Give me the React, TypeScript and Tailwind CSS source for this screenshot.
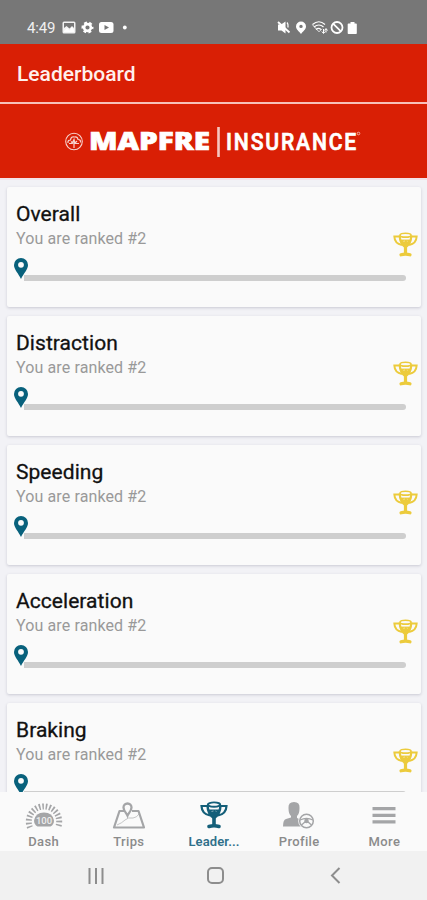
import type { ReactNode } from "react";

const Trophy = ({ className }: { className: string }) => (
    <svg viewBox="0 0 28 28" className={className} fill="none" stroke="currentColor">
        <path d="M7.500 4q.3 9.500 6.500 13 6.200-3.500 6.500-13" strokeWidth="2.500" />
        <path d="M8.500 9l11 0q-1.500 6-5.500 8-4-2-5.500-8z" fill="currentColor" />
        <ellipse cx="14" cy="3.600" rx="6.200" ry="2.200" fill="#fafafa" strokeWidth="1.900" />
        <path d="M7 5H1.500c.2 5.500 3.500 8.500 8.500 9.500M21 5h5.500c-.2 5.500-3.500 8.500-8.500 9.500" strokeWidth="2.200" />
        <path d="M11.500 10.500l2-.5M15.500 10l1 .5" stroke="#fafafa" strokeWidth="1" opacity="0.500" />
        <path d="M14 16v8" strokeWidth="3.600" />
        <path d="M9 25.500q5-1.500 10 0" strokeWidth="3.600" strokeLinecap="round" />
    </svg>
);

const Pin = ({ className }: { className: string }) => (
    <svg viewBox="0 0 14 21" className={className} fill="currentColor">
        <path fillRule="evenodd" d="M7 0a7 7 0 0 0-7 7c0 4.500 4.500 8.500 7 14 2.500-5.500 7-9.500 7-14a7 7 0 0 0-7-7zm0 3.900a2.900 2.900 0 1 1 0 5.800 2.900 2.900 0 0 1 0-5.800z" />
    </svg>
);

const StatusBar = () => (
    <div className="flex h-11 shrink-0 items-start bg-[#777777] pt-5 text-white">
        <span className="ml-[27px] w-[35px] text-[15px] leading-[16px] tracking-[-0.2px] text-[#f0f0f0]">4:49</span>
        <svg width="68" height="16" viewBox="0 0 68 16" fill="currentColor">
            <path fillRule="evenodd" d="M2 1.500h10q1.500 0 1.500 1.500v9q0 1.500-1.500 1.500H2Q.5 13.500.5 12V3Q.5 1.500 2 1.500zm0 1.500v5l2.500-2 3 2.500L10 6l2 2V3z" opacity="0.9" />
            <path d="M2 11l3-3 2.500 2.500L10 7l2 3v2H2z" />
            <circle cx="25.500" cy="7.500" r="3.400" fill="none" stroke="currentColor" strokeWidth="2.600" />
            <circle cx="25.500" cy="7.500" r="5" fill="none" stroke="currentColor" strokeWidth="2" strokeDasharray="2.900 2.336" strokeDashoffset="1.450" />
            <rect x="37" y="2" width="14.500" height="11" rx="2.500" />
            <path d="M42.500 5v5l4.500-2.500z" fill="#777777" />
            <circle cx="62.800" cy="7.500" r="1.900" />
        </svg>
        <svg width="84" height="16" viewBox="0 0 84 16" fill="currentColor" className="ml-[147px]">
            <path d="M1 4.500h3l4.500-3V13.500L4.500 10.500H1z" />
            <path d="M1 2l11.500 10.500" stroke="currentColor" strokeWidth="1.800" />
            <path d="M10 2.500q1.500 1.500 1 5" fill="none" stroke="currentColor" strokeWidth="1.300" />
            <path fillRule="evenodd" d="M24 1.500a5 5 0 0 0-5 5c0 3.200 3 4.500 5 7.500 2-3 5-4.300 5-7.500a5 5 0 0 0-5-5zm0 3.200a1.700 1.700 0 1 1 0 3.400 1.700 1.700 0 0 1 0-3.400z" />
            <g fill="none" stroke="currentColor" strokeWidth="1.200">
                <path d="M35.500 4.500q6.500-5.500 12.500 0M37 7q5-4 9.500 0M39 9.500q2.500-2.200 5 0" />
                <path d="M35.500 4.800l6.500 7 3-3" strokeWidth="0.800" />
                <path d="M46.500 9v4M44.800 11.500l1.700 2 1.700-2M49 12.500V9M47.500 10.500L49 8.500l1.500 2" strokeWidth="1" />
                <circle cx="60" cy="7.500" r="5.500" strokeWidth="1.800" />
                <path d="M56.300 3.800l7.400 7.400" strokeWidth="1.700" />
            </g>
            <path d="M72 3.500h1.500V2h4v1.500H79q.8 0 .8.800v8.900q0 .8-.8.800h-7.500q-.8 0-.8-.8V4.300q0-.8.800-.8z" />
        </svg>
    </div>
);

const Logo = () => (
    <svg width="427" height="74" viewBox="0 0 427 74" fill="#fff">
        <g fill="none" stroke="#fff" opacity="0.8">
            <circle cx="74" cy="37.500" r="8.300" strokeWidth="1.100" />
            <path d="M68 39q-.5-3 2.500-3 .5-4 4-3 3-.5 3.500 2.500 3 0 2.500 3M69 39.500h3l2-4 1 4h4M74 36v8M71 37.500l2 2M77 37l-2 2" strokeWidth="1.200" />
        </g>
        <text x="89" y="46" fontFamily="Open Sans" fontWeight="800" fontSize="24" textLength="121" lengthAdjust="spacingAndGlyphs" stroke="#fff" strokeWidth="0.700">MAPFRE</text>
        <rect x="217.200" y="23" width="2.600" height="30" opacity="0.75" />
        <text transform="translate(226 46) scale(0.88 1)" fontFamily="Roboto" fontWeight="500" fontSize="24" textLength="148" lengthAdjust="spacing" stroke="#fff" strokeWidth="0.700">INSURANCE</text>
        <circle cx="358.500" cy="29.500" r="1.300" fill="none" stroke="#fff" strokeWidth="0.800" opacity="0.700" />
    </svg>
);

const RankCard = ({ title, rank }: { title: string; rank: number }) => (
    <div className="flex h-[120px] shrink-0 flex-col rounded-[2px] bg-[#fafafa] pl-[9px] pr-[15px] pt-[14px] shadow-[0_1px_3px_rgba(60,60,90,0.22)]">
        <div className="h-[26px] text-[21px] leading-[26px] tracking-[0.05px] text-[#111111] [-webkit-text-stroke:0.3px_#111111]">{title}</div>
        <div className="flex h-[31px] justify-between">
            <div className="text-[16px] leading-[24px] tracking-[0.12px] text-[#999999]">You are ranked #{rank}</div>
            <Trophy className="-mr-[12px] mt-[5px] h-[25px] w-[25px] text-[#eccb3c]" />
        </div>
        <div className="flex h-[21px]">
            <Pin className="-ml-[2px] h-[21px] w-[14px] shrink-0 text-[#08617c]" />
            <div className="-ml-[4px] mt-[17px] h-[6px] grow rounded-r-full bg-[#cecece]" />
        </div>
    </div>
);

const DashIcon = () => (
    <svg width="38" height="29" viewBox="0 0 38 29">
        <path d="M5 26.500A15.200 15.200 0 1 1 33 26.500" fill="none" stroke="currentColor" strokeWidth="6" strokeDasharray="1.600 1.900" />
        <path d="M12.500 25.500q-3.500-2-3.500-6 1.500-8 10-8t10 8q0 4-3.500 6z" fill="currentColor" />
        <text x="19" y="22.500" textAnchor="middle" fontSize="9.500" fontWeight="500" fill="#eeeeee" fontFamily="Roboto">100</text>
    </svg>
);

const TripsIcon = () => (
    <svg width="34" height="29" viewBox="0 0 34 29" fill="none" stroke="currentColor">
        <path d="M12 10H7.500L2 26.500h30L26.500 10H20" strokeWidth="2.200" strokeLinejoin="round" />
        <path d="M5 24q5-2 8-5t8-2q4-.5 6-4" strokeWidth="0.900" opacity="0.700" />
        <path d="M15.500 14.500c-1-2.500-4-4.500-4-8a4 4 0 0 1 8 0c0 3.500-3 5.500-4 8z" strokeWidth="2.300" fill="#fafafa" />
    </svg>
);

const ProfileIcon = () => (
    <svg width="34" height="29" viewBox="0 0 34 29">
        <path d="M6.500 7q-.5-6 5.500-6t5.500 6q0 6-2.500 8v2l7 3v5.500H1q0-7 3-7.500l5-1.500V15q-2.500-2-2.500-8z" fill="currentColor" />
        <circle cx="24.500" cy="20" r="8.300" fill="#fafafa" />
        <g fill="none" stroke="currentColor" strokeWidth="1.500">
            <circle cx="24.500" cy="20" r="6.800" />
            <path d="M18 19q6.500-3 13 0M23.500 20.500l-4 3.500M25.500 20.500l4 3.500" strokeWidth="1.300" />
            <circle cx="24.500" cy="20" r="1.500" fill="currentColor" />
        </g>
    </svg>
);

const MoreIcon = () => (
    <svg width="24" height="29" viewBox="0 0 24 29" fill="currentColor">
        <path d="M.5 6h23v3.300H.5zM.5 12.700h23V16H.5zM.5 19.300h23v3.300H.5z" />
    </svg>
);

const NavItem = ({ label, active, children }: { label: string; active?: boolean; children: ReactNode }) => (
    <div className={active ? "flex flex-1 flex-col items-center text-[#145f79]" : "flex flex-1 flex-col items-center text-[#a4a5a7]"}>
        <div className="flex h-[38px] items-end">{children}</div>
        <div className={active ? "mt-[4px] text-[13px] font-semibold leading-[16px] tracking-[0.1px] text-[#2f708a]" : "mt-[4px] text-[13px] font-medium leading-[16px] tracking-[0.35px] text-[#8b8b8b]"}>
            {label}
        </div>
    </div>
);

const titles = ["Overall", "Distraction", "Speeding", "Acceleration", "Braking"];

const App = () => {
    return (
        <div className="flex h-[900px] w-[427px] flex-col overflow-hidden bg-[#f2f2f6] font-['Roboto',sans-serif]">
            <StatusBar />
            <div className="flex h-[58px] shrink-0 items-center bg-[#d91f05] pl-[17px] pt-[4px] text-[21px] font-medium text-[#fff0ed]">
                Leaderboard
            </div>
            <div className="h-[2px] shrink-0 bg-[#f7c1ba]" />
            <div className="h-[74px] shrink-0 bg-[#d91f05]">
                <Logo />
            </div>
            <div className="flex min-h-0 grow flex-col gap-[9px] overflow-hidden border-t-2 border-[#f3e1e8] pl-[7px] pr-[6px] pt-[7px]">
                {titles.map((title) => (
                    <RankCard key={title} title={title} rank={2} />
                ))}
            </div>
            <div className="flex h-[59px] shrink-0 bg-[#fafafa] pl-[1px]">
                <NavItem label="Dash">
                    <DashIcon />
                </NavItem>
                <NavItem label="Trips">
                    <TripsIcon />
                </NavItem>
                <NavItem label="Leader..." active>
                    <Trophy className="mb-[1px] h-[28px] w-[28px]" />
                </NavItem>
                <NavItem label="Profile">
                    <ProfileIcon />
                </NavItem>
                <NavItem label="More">
                    <MoreIcon />
                </NavItem>
            </div>
            <div className="flex h-[49px] shrink-0 items-center bg-[#f1f1f1] pl-[88px] text-[#8d8d8d]">
                <svg width="16" height="16" viewBox="0 0 16 16" stroke="currentColor" strokeWidth="2">
                    <path d="M1.500 0v16M8 0v16M14.500 0v16" />
                </svg>
                <div className="ml-[103px] h-[17px] w-[17px] rounded-[5px] border-2 border-current" />
                <svg width="11" height="17" viewBox="0 0 11 17" fill="none" stroke="currentColor" strokeWidth="2" className="ml-[106px]">
                    <path d="M9.500 1L2 8.500 9.500 16" />
                </svg>
            </div>
        </div>
    );
};

export default App;
